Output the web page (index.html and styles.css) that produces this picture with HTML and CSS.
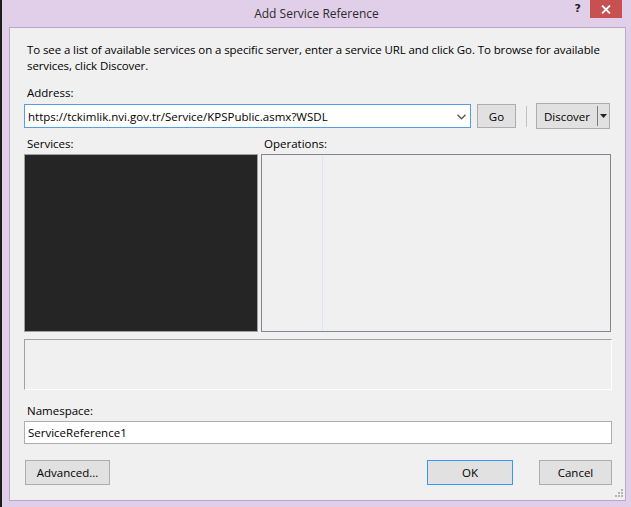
FILE: index.html
```html
<!DOCTYPE html>
<html lang="en">
<head>
<meta charset="utf-8">
<title>Add Service Reference</title>
<link rel="stylesheet" href="styles.css">
</head>
<body>
<div class="window">
  <div class="titlebar">
    <div class="tb-side"></div>
    <div class="title">Add Service Reference</div>
    <div class="tb-side tb-controls">
      <span class="help">?</span>
      <span class="close">
        <svg width="10" height="9" viewBox="0 0 10 9"><path d="M1 0.5 L9 8.5 M9 0.5 L1 8.5" stroke="#fff" stroke-width="1.8" fill="none"/></svg>
      </span>
    </div>
  </div>
  <div class="client">
    <p class="intro">To see a list of available services on a specific server, enter a service URL and click Go. To browse for available services, click Discover.</p>
    <div class="label addr-label">Address:</div>
    <div class="addr-row">
      <div class="combo">
        <span class="combo-text">https://tckimlik.nvi.gov.tr/Service/KPSPublic.asmx?WSDL</span>
        <svg class="chev" width="9" height="6" viewBox="0 0 9 6"><path d="M0.5 0.8 L4.5 4.8 L8.5 0.8" stroke="#555" stroke-width="1.3" fill="none"/></svg>
      </div>
      <div class="btn go">Go</div>
      <div class="vsep"></div>
      <div class="btn split">
        <span class="split-main">Discover</span>
        <span class="split-div"></span>
        <span class="split-arrow"><svg width="7" height="4" viewBox="0 0 7 4"><path d="M0 0 H7 L3.5 4 Z" fill="#222"/></svg></span>
      </div>
    </div>
    <div class="panes">
      <div class="pane">
        <div class="label pane-label">Services:</div>
        <div class="services"></div>
      </div>
      <div class="pane">
        <div class="label pane-label">Operations:</div>
        <div class="operations"><div class="ops-col"></div></div>
      </div>
    </div>
    <div class="descbox"></div>
    <div class="label ns-label">Namespace:</div>
    <div class="textbox">ServiceReference1</div>
    <div class="footer">
      <div class="btn advanced">Advanced...</div>
      <div class="footer-right">
        <div class="btn ok">OK</div>
        <div class="btn cancel">Cancel</div>
      </div>
    </div>
    <svg class="grip" width="8" height="8" viewBox="0 0 8 8">
      <rect x="6" y="0" width="2" height="2" fill="#b5b5b5"/>
      <rect x="3" y="3" width="2" height="2" fill="#b5b5b5"/>
      <rect x="6" y="3" width="2" height="2" fill="#b5b5b5"/>
      <rect x="0" y="6" width="2" height="2" fill="#b5b5b5"/>
      <rect x="3" y="6" width="2" height="2" fill="#b5b5b5"/>
      <rect x="6" y="6" width="2" height="2" fill="#b5b5b5"/>
    </svg>
  </div>
</div>
</body>
</html>
```
FILE: styles.css
```css
html, body {
  margin: 0;
  padding: 0;
}
body {
  width: 631px;
  height: 507px;
  overflow: hidden;
  background: #1c1c1c;
  font-family: "Open Sans", "Noto Sans", sans-serif;
  font-size: 11.5px;
  color: #000;
}
.window {
  margin-left: 2px;
  width: 629px;
  height: 507px;
  background: #e1cfea;
  display: flex;
  flex-direction: column;
}
.titlebar {
  height: 27px;
  display: grid;
  grid-template-columns: 1fr auto 1fr;
  align-items: start;
}
.title {
  padding-top: 5px;
  font-size: 12px;
  color: #2b2b2b;
  line-height: 17px;
}
.tb-controls {
  display: flex;
  justify-content: flex-end;
  align-items: flex-start;
  padding-right: 9px;
}
.help {
  font-family: "DejaVu Sans", sans-serif;
  font-weight: bold;
  font-size: 11px;
  color: #222;
  line-height: 14px;
  margin-top: 2px;
  margin-right: 9px;
}
.close {
  width: 32px;
  height: 18px;
  background: #c75050;
  display: flex;
  align-items: center;
  justify-content: center;
}
.client {
  position: relative;
  margin: 0 5px 0 7px;
  height: 474px;
  box-sizing: border-box;
  border: 1px solid #b8a9c2;
  background: #f0f0f0;
  padding: 14px 13px 0 14px;
  display: flex;
  flex-direction: column;
}
.intro {
  margin: 0 0 0 3px;
  line-height: 16px;
  letter-spacing: -0.1px;
}
.label {
  line-height: 15px;
  padding-left: 3px;
}
.addr-label {
  margin-top: 11px;
}
.addr-row {
  margin-top: 3px;
  display: flex;
  align-items: center;
  height: 26px;
}
.combo {
  width: 447px;
  height: 24px;
  box-sizing: border-box;
  border: 1px solid #569de5;
  background: #fff;
  display: flex;
  align-items: center;
  padding-left: 3px;
  padding-right: 4px;
}
.combo-text {
  flex: 1;
  white-space: nowrap;
  overflow: hidden;
}
.chev {
  margin-top: 2px;
}
.btn {
  box-sizing: border-box;
  border: 1px solid #adadad;
  background: #e1e1e1;
  display: flex;
  align-items: center;
  justify-content: center;
  white-space: nowrap;
}
.go {
  margin-left: 6px;
  width: 39px;
  height: 24px;
}
.vsep {
  margin-left: 10px;
  width: 1px;
  height: 21px;
  background: #c2c2c2;
}
.split {
  margin-left: 9px;
  width: 74px;
  height: 26px;
  justify-content: flex-start;
}
.split-main {
  width: 60px;
  text-align: center;
}
.split-div {
  width: 1px;
  height: 20px;
  background: #7a7a7a;
}
.split-arrow {
  flex: 1;
  display: flex;
  justify-content: center;
}
.panes {
  margin-top: 7px;
  display: grid;
  grid-template-columns: 234px 350px;
  column-gap: 3px;
}
.pane-label {
  margin-bottom: 3px;
}
.services {
  height: 178px;
  box-sizing: border-box;
  border: 1px solid #a0a0a0;
  background: #252525;
}
.operations {
  height: 178px;
  box-sizing: border-box;
  border: 1px solid #82878e;
  background: #f0f0f0;
  padding: 1px 0 1px 60px;
  display: flex;
}
.ops-col {
  width: 1px;
  background: #dce5f3;
}
.descbox {
  margin-top: 7px;
  height: 51px;
  box-sizing: border-box;
  border-top: 1px solid #a0a0a0;
  border-left: 1px solid #a0a0a0;
  border-right: 1px solid #fff;
  border-bottom: 1px solid #fff;
}
.ns-label {
  margin-top: 13px;
}
.textbox {
  margin-top: 3px;
  height: 23px;
  box-sizing: border-box;
  border: 1px solid #abadb3;
  background: #fff;
  padding-left: 3px;
  display: flex;
  align-items: center;
}
.footer {
  margin-top: 16px;
  display: flex;
  justify-content: space-between;
  padding-left: 1px;
}
.footer-right {
  display: flex;
  gap: 26px;
}
.advanced {
  width: 85px;
  height: 25px;
}
.ok {
  width: 86px;
  height: 25px;
  border-color: #3399ff;
}
.cancel {
  width: 73px;
  height: 25px;
}
.grip {
  position: absolute;
  right: 2px;
  bottom: 3px;
}
```
